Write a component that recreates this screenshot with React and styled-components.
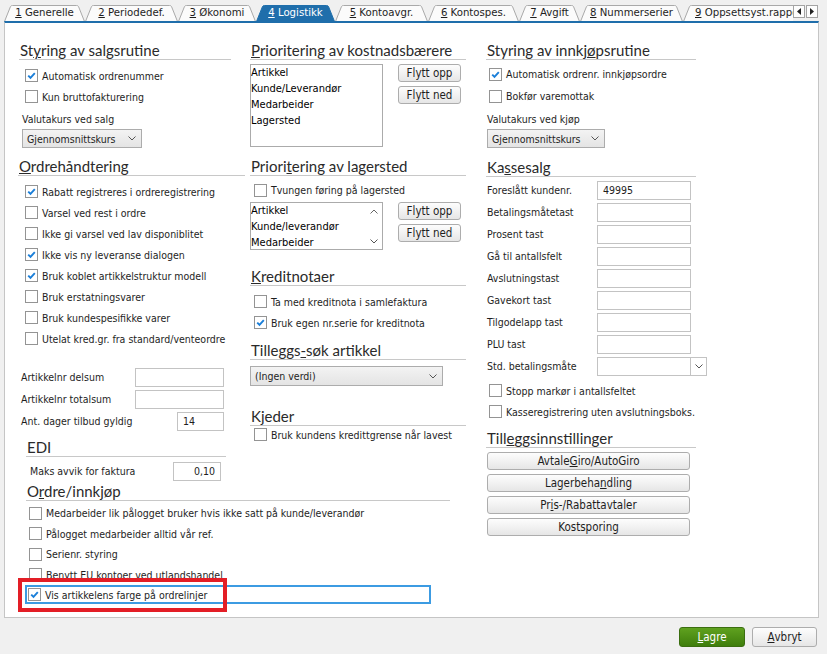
import React from 'react';
import styled, { createGlobalStyle } from 'styled-components';

const UI = `"DejaVu Sans Condensed", "DejaVu Sans", Verdana, sans-serif`;
const HEAD = `Lato, "Open Sans", sans-serif`;
const BLUE = '#1f6eab';

const Global = createGlobalStyle`
  html, body { margin: 0; padding: 0; background: #f0f0f0; }
  body { font-family: ${UI}; font-size: 10.5px; color: #1e1e1e; font-stretch: condensed; }
  * { box-sizing: border-box; }
`;

const Window = styled.div`
  width: 827px;
  height: 654px;
  background: #f0f0f0;
  padding-top: 5px;
  display: flex;
  flex-direction: column;
  overflow: hidden;
`;

const TabStrip = styled.div`
  display: flex;
  width: 827px;
  height: 16px;
  padding-left: 4px;
`;

const Tabs = styled.div`
  display: flex;
  flex: 0 0 789px;
  width: 789px;
  min-width: 0;
  overflow: hidden;
`;

const TabItem = styled.div`
  position: relative;
  flex: 0 0 ${p => p.$w}px;
  width: ${p => p.$w}px;
  height: 16px;
  display: flex;
  align-items: center;
  justify-content: ${p => (p.$left ? 'flex-start' : 'center')};
  padding-left: ${p => (p.$left ? 12 : 0)}px;
  font-size: 11.3px;
  color: ${p => (p.$active ? '#ffffff' : '#1e1e1e')};
  white-space: nowrap;
`;

const TabShape = styled.svg`
  position: absolute;
  left: 0;
  top: 0;
`;

const TabLabel = styled.span`
  position: relative;
  line-height: 16px;
`;

const ScrollBtns = styled.div`
  flex: 0 0 25px;
  display: flex;
  gap: 1px;
`;

const ScrollBtn = styled.div`
  width: 12px;
  height: 13px;
  border: 1px solid #a3a3a3;
  background: #fdfdfd;
  display: flex;
  align-items: center;
  justify-content: center;
`;

const Panel = styled.div`
  margin-left: 4px;
  width: 815px;
  height: 597px;
  background: #ffffff;
  border: 1px solid #c5c5c5;
  border-top: 2px solid ${BLUE};
  padding: 19px 0 0 13px;
  display: flex;
  align-items: flex-start;
`;

const Column = styled.div`
  flex: 0 0 ${p => p.$w}px;
  width: ${p => p.$w}px;
  min-width: 0;
  display: flex;
  flex-direction: column;
  align-items: flex-start;
`;

const Mn = styled.span`
  text-decoration: underline;
  text-underline-offset: 1px;
`;

const SectionHead = styled.div`
  width: ${p => p.$w}px;
  flex: 0 0 auto;
  margin-top: ${p => p.$mt || 0}px;
  margin-left: ${p => p.$ml || 0}px;
  padding-left: 1px;
  height: 18px;
  line-height: 17px;
  font-family: ${HEAD};
  font-size: 15px;
  color: #2a2a2a;
  border-bottom: 1px solid #c8c8c8;
  white-space: nowrap;
`;

const CheckRowBox = styled.div`
  display: flex;
  align-items: center;
  height: ${p => p.$h || 21}px;
  margin-top: ${p => p.$mt || 0}px;
  padding-left: ${p => p.$pl || 0}px;
  white-space: nowrap;
`;

const Box = styled.span`
  flex: 0 0 13px;
  width: 13px;
  height: 13px;
  border: 1px solid #949494;
  background: #fff;
  margin-right: 4px;
  display: flex;
  align-items: center;
  justify-content: center;
`;

const FocusRow = styled.div`
  position: relative;
  display: flex;
  align-items: center;
  width: 406px;
  height: 19px;
  margin-left: -1px;
  padding-left: 1px;
  border: 2px solid #3c9be2;
  white-space: nowrap;
`;

const RedMark = styled.div`
  position: absolute;
  left: -9px;
  top: -9px;
  width: 209px;
  height: 34px;
  border: 4px solid #e31e26;
  pointer-events: none;
`;

const Label = styled.div`
  height: 16px;
  line-height: 16px;
  margin-top: ${p => p.$mt || 0}px;
  padding-left: ${p => p.$pl || 0}px;
  white-space: nowrap;
`;

const Combo = styled.div`
  width: ${p => p.$w}px;
  height: ${p => p.$h || 19}px;
  margin-top: ${p => p.$mt || 0}px;
  margin-left: ${p => p.$ml || 0}px;
  border: 1px solid #acacac;
  background: linear-gradient(#f3f3f3, #e4e4e4);
  display: flex;
  align-items: center;
  justify-content: space-between;
  padding: 0 5px 0 4px;
  white-space: nowrap;
`;

const ComboPlain = styled.div`
  width: ${p => p.$w}px;
  height: 19px;
  border: 1px solid #c3c3c3;
  background: #fff;
  display: flex;
  justify-content: flex-end;
`;

const ComboBtn = styled.div`
  width: 16px;
  border-left: 1px solid #c3c3c3;
  display: flex;
  align-items: center;
  justify-content: center;
`;

const FieldRow = styled.div`
  display: flex;
  align-items: center;
  justify-content: space-between;
  width: ${p => p.$w}px;
  height: 22px;
  margin-top: ${p => p.$mt || 0}px;
  padding-left: ${p => p.$pl || 0}px;
  white-space: nowrap;
`;

const TextBox = styled.div`
  width: ${p => p.$w}px;
  height: 19px;
  border: 1px solid #c3c3c3;
  background: #fff;
  line-height: 17px;
  padding: 0 5px;
  text-align: ${p => p.$align || 'left'};
`;

const ListRow = styled.div`
  display: flex;
  align-items: flex-start;
  margin-top: ${p => p.$mt || 0}px;
`;

const ListBox = styled.div`
  width: 133px;
  height: ${p => p.$h}px;
  border: 1px solid #ababab;
  background: #fff;
  display: flex;
  overflow: hidden;
`;

const ListItems = styled.div`
  flex: 1;
  display: flex;
  flex-direction: column;
  font-size: 11px;
  color: #000;
`;

const ListItem = styled.div`
  height: 16px;
  line-height: 16px;
  white-space: nowrap;
`;

const ListScroll = styled.div`
  flex: 0 0 17px;
  display: flex;
  flex-direction: column;
  justify-content: space-between;
  align-items: center;
  padding: 6px 0 5px;
`;

const BtnStack = styled.div`
  display: flex;
  flex-direction: column;
  gap: 4px;
  margin-left: ${p => (p.$ml !== undefined ? p.$ml : 15)}px;
  margin-top: ${p => p.$mt || 0}px;
`;

const Button = styled.div`
  width: ${p => p.$w}px;
  height: ${p => p.$h || 18}px;
  border: 1px solid #adadad;
  border-radius: 3px;
  background: linear-gradient(#fdfdfd, #e6e6e6);
  display: flex;
  align-items: center;
  justify-content: center;
  font-size: 11.5px;
  color: #1e1e1e;
  white-space: nowrap;
`;

const GreenButton = styled(Button)`
  border-color: #3b6e10;
  background: linear-gradient(#5fa11f, #3f7e0c);
  color: #fff;
`;

const Section = styled.div`
  display: flex;
  flex-direction: column;
  align-items: flex-start;
  margin-left: ${p => p.$ml || 0}px;
`;

const Footer = styled.div`
  display: flex;
  justify-content: flex-end;
  gap: 7px;
  padding: 9px 10px 0 0;
`;

const Check = () => (
  <svg width="11" height="11" viewBox="0 0 11 11">
    <path d="M2.2 5.6 L4.5 7.8 L8.8 3.2" stroke="#1b7fd9" strokeWidth="1.9" fill="none" />
  </svg>
);

const Chevron = () => (
  <svg width="8" height="5" viewBox="0 0 8 5">
    <path d="M0.5 0.5 L4 4 L7.5 0.5" stroke="#555" strokeWidth="1" fill="none" />
  </svg>
);

const ChevronUp = () => (
  <svg width="8" height="5" viewBox="0 0 8 5">
    <path d="M0.5 4.5 L4 1 L7.5 4.5" stroke="#666" strokeWidth="1" fill="none" />
  </svg>
);

const CheckRow = ({ checked, children, ...rest }) => (
  <CheckRowBox {...rest}>
    <Box>{checked && <Check />}</Box>
    <span>{children}</span>
  </CheckRowBox>
);

const Tab = ({ w, active, left, n, children }) => (
  <TabItem $w={w} $active={active} $left={left}>
    <TabShape width={w} height={16} viewBox={`0 0 ${w} 16`}>
      <path
        d={`M0.5 16.5 L6.5 1.5 Q7 0.5 8.5 0.5 L${w - 8.5} 0.5 Q${w - 7} 0.5 ${w - 6.5} 1.5 L${w - 0.5} 16.5`}
        fill={active ? BLUE : '#fbfbfb'}
        stroke={active ? BLUE : '#a9a9a9'}
        strokeWidth="1"
      />
    </TabShape>
    <TabLabel>
      <Mn>{n}</Mn> {children}
    </TabLabel>
  </TabItem>
);

const tabs = [
  { w: 81, n: '1', t: 'Generelle' },
  { w: 93, n: '2', t: 'Periodedef.' },
  { w: 78, n: '3', t: 'Økonomi' },
  { w: 79, n: '4', t: 'Logistikk', active: true },
  { w: 93, n: '5', t: 'Kontoavgr.' },
  { w: 91, n: '6', t: 'Kontospes.' },
  { w: 61, n: '7', t: 'Avgift' },
  { w: 103, n: '8', t: 'Nummerserier' },
  { w: 130, n: '9', t: 'Oppsettsyst.rapporter', left: true },
];

const ordreChecks = [
  ['Rabatt registreres i ordreregistrering', true],
  ['Varsel ved rest i ordre', false],
  ['Ikke gi varsel ved lav disponiblitet', false],
  ['Ikke vis ny leveranse dialogen', true],
  ['Bruk koblet artikkelstruktur modell', true],
  ['Bruk erstatningsvarer', false],
  ['Bruk kundespesifikke varer', false],
  ['Utelat kred.gr. fra standard/venteordre', false],
];

const kasseFields = [
  ['Foreslått kundenr.', '49995'],
  ['Betalingsmåtetast', ''],
  ['Prosent tast', ''],
  ['Gå til antallsfelt', ''],
  ['Avslutningstast', ''],
  ['Gavekort tast', ''],
  ['Tilgodelapp tast', ''],
  ['PLU tast', ''],
];

export default function App() {
  return (
    <Window>
      <Global />
      <TabStrip>
        <Tabs>
          {tabs.map(t => (
            <Tab key={t.n} w={t.w} n={t.n} active={t.active} left={t.left}>
              {t.t}
            </Tab>
          ))}
        </Tabs>
        <ScrollBtns>
          <ScrollBtn>
            <svg width="4" height="7" viewBox="0 0 4 7"><path d="M4 0 L0 3.5 L4 7 Z" fill="#222" /></svg>
          </ScrollBtn>
          <ScrollBtn>
            <svg width="4" height="7" viewBox="0 0 4 7"><path d="M0 0 L4 3.5 L0 7 Z" fill="#222" /></svg>
          </ScrollBtn>
        </ScrollBtns>
      </TabStrip>

      <Panel>
        <Column $w={232}>
          <SectionHead $w={212} $ml={1}>
            St<Mn>y</Mn>ring av salgsrutine
          </SectionHead>
          <CheckRow $mt={5} $pl={7} checked>Automatisk ordrenummer</CheckRow>
          <CheckRow $pl={7}>Kun bruttofakturering</CheckRow>
          <Label $mt={4} $pl={4}>Valutakurs ved salg</Label>
          <Combo $w={120} $mt={2} $ml={4}>
            <span>Gjennomsnittskurs</span>
            <Chevron />
          </Combo>

          <SectionHead $w={227} $mt={10}>
            <Mn>O</Mn>rdrehåndtering
          </SectionHead>
          {ordreChecks.map(([t, c], i) => (
            <CheckRow key={t} $mt={i === 0 ? 5 : 0} $pl={7} checked={c}>{t}</CheckRow>
          ))}

          <FieldRow $w={206} $pl={3} $mt={17}>
            <span>Artikkelnr delsum</span>
            <TextBox $w={89} />
          </FieldRow>
          <FieldRow $w={206} $pl={3}>
            <span>Artikkelnr totalsum</span>
            <TextBox $w={89} />
          </FieldRow>
          <FieldRow $w={206} $pl={3}>
            <span>Ant. dager tilbud gyldig</span>
            <TextBox $w={47}>14</TextBox>
          </FieldRow>

          <Section $ml={8}>
            <SectionHead $w={200} $mt={7}>EDI</SectionHead>
            <FieldRow $w={195} $pl={4} $mt={3}>
              <span>Maks avvik for faktura</span>
              <TextBox $w={48} $align="right">0,10</TextBox>
            </FieldRow>
            <SectionHead $w={424} $mt={1}>
              O<Mn>r</Mn>dre/innkjøp
            </SectionHead>
            <CheckRow $h={20.5} $mt={2} $pl={3}>Medarbeider lik pålogget bruker hvis ikke satt på kunde/leverandør</CheckRow>
            <CheckRow $h={20.5} $pl={3}>Pålogget medarbeider alltid vår ref.</CheckRow>
            <CheckRow $h={20.5} $pl={3}>Serienr. styring</CheckRow>
            <CheckRow $h={20.5} $pl={3}>Benytt EU kontoer ved utlandshandel</CheckRow>
            <FocusRow>
              <Box><Check /></Box>
              <span>Vis artikkelens farge på ordrelinjer</span>
              <RedMark />
            </FocusRow>
          </Section>
        </Column>

        <Column $w={236}>
          <SectionHead $w={216}>
            <Mn>P</Mn>rioritering av kostnadsbærere
          </SectionHead>
          <ListRow $mt={4}>
            <ListBox $h={83}>
              <ListItems>
                <ListItem>Artikkel</ListItem>
                <ListItem>Kunde/Leverandør</ListItem>
                <ListItem>Medarbeider</ListItem>
                <ListItem>Lagersted</ListItem>
              </ListItems>
            </ListBox>
            <BtnStack>
              <Button $w={63}>Flytt opp</Button>
              <Button $w={63}>Flytt ned</Button>
            </BtnStack>
          </ListRow>

          <SectionHead $w={216} $mt={11}>
            Priori<Mn>t</Mn>ering av lagersted
          </SectionHead>
          <CheckRow $h={18} $mt={5} $pl={4}>Tvungen føring på lagersted</CheckRow>
          <ListRow $mt={3}>
            <ListBox $h={48}>
              <ListItems>
                <ListItem>Artikkel</ListItem>
                <ListItem>Kunde/leverandør</ListItem>
                <ListItem>Medarbeider</ListItem>
              </ListItems>
              <ListScroll>
                <ChevronUp />
                <Chevron />
              </ListScroll>
            </ListBox>
            <BtnStack>
              <Button $w={63}>Flytt opp</Button>
              <Button $w={63}>Flytt ned</Button>
            </BtnStack>
          </ListRow>

          <SectionHead $w={216} $mt={18}>
            <Mn>K</Mn>reditnotaer
          </SectionHead>
          <CheckRow $mt={5} $pl={4}>Ta med kreditnota i samlefaktura</CheckRow>
          <CheckRow $pl={4} checked>Bruk egen nr.serie for kreditnota</CheckRow>

          <SectionHead $w={216} $mt={9}>
            Tilleggs<Mn>-</Mn>søk artikkel
          </SectionHead>
          <Combo $w={193} $h={20} $mt={6}>
            <span>(Ingen verdi)</span>
            <Chevron />
          </Combo>

          <SectionHead $w={216} $mt={22}>Kjeder</SectionHead>
          <CheckRow $h={19} $mt={-1} $pl={4}>Bruk kundens kredittgrense når lavest</CheckRow>
        </Column>

        <Column $w={230}>
          <SectionHead $w={210}>
            Styring av innkj<Mn>ø</Mn>psrutine
          </SectionHead>
          <CheckRow $h={22} $mt={3} $pl={3} checked>Automatisk ordrenr. innkjøpsordre</CheckRow>
          <CheckRow $h={22} $pl={3}>Bokfør varemottak</CheckRow>
          <Label $mt={4} $pl={1}>Valutakurs ved kjøp</Label>
          <Combo $w={118} $mt={2} $ml={1}>
            <span>Gjennomsnittskurs</span>
            <Chevron />
          </Combo>

          <SectionHead $w={210} $mt={11}>
            Ka<Mn>s</Mn>sesalg
          </SectionHead>
          {kasseFields.map(([l, v], i) => (
            <FieldRow key={l} $w={205} $pl={1} $mt={i === 0 ? 2 : 0}>
              <span>{l}</span>
              <TextBox $w={94}>{v}</TextBox>
            </FieldRow>
          ))}
          <FieldRow $w={221} $pl={1}>
            <span>Std. betalingsmåte</span>
            <ComboPlain $w={110}>
              <ComboBtn><Chevron /></ComboBtn>
            </ComboPlain>
          </FieldRow>
          <CheckRow $mt={3} $pl={3}>Stopp markør i antallsfeltet</CheckRow>
          <CheckRow $pl={3}>Kasseregistrering uten avslutningsboks.</CheckRow>

          <SectionHead $w={210} $mt={8}>
            Till<Mn>e</Mn>ggsinnstillinger
          </SectionHead>
          <BtnStack $mt={4} $ml={1}>
            <Button $w={203}>Avtale<Mn>G</Mn>iro/AutoGiro</Button>
            <Button $w={203}>Lagerbeha<Mn>n</Mn>dling</Button>
            <Button $w={203}>Pr<Mn>i</Mn>s-/Rabattavtaler</Button>
            <Button $w={203}>Kostsporing</Button>
          </BtnStack>
        </Column>
      </Panel>

      <Footer>
        <GreenButton $w={66} $h={20}><Mn>L</Mn>agre</GreenButton>
        <Button $w={65} $h={20}><Mn>A</Mn>vbryt</Button>
      </Footer>
    </Window>
  );
}
